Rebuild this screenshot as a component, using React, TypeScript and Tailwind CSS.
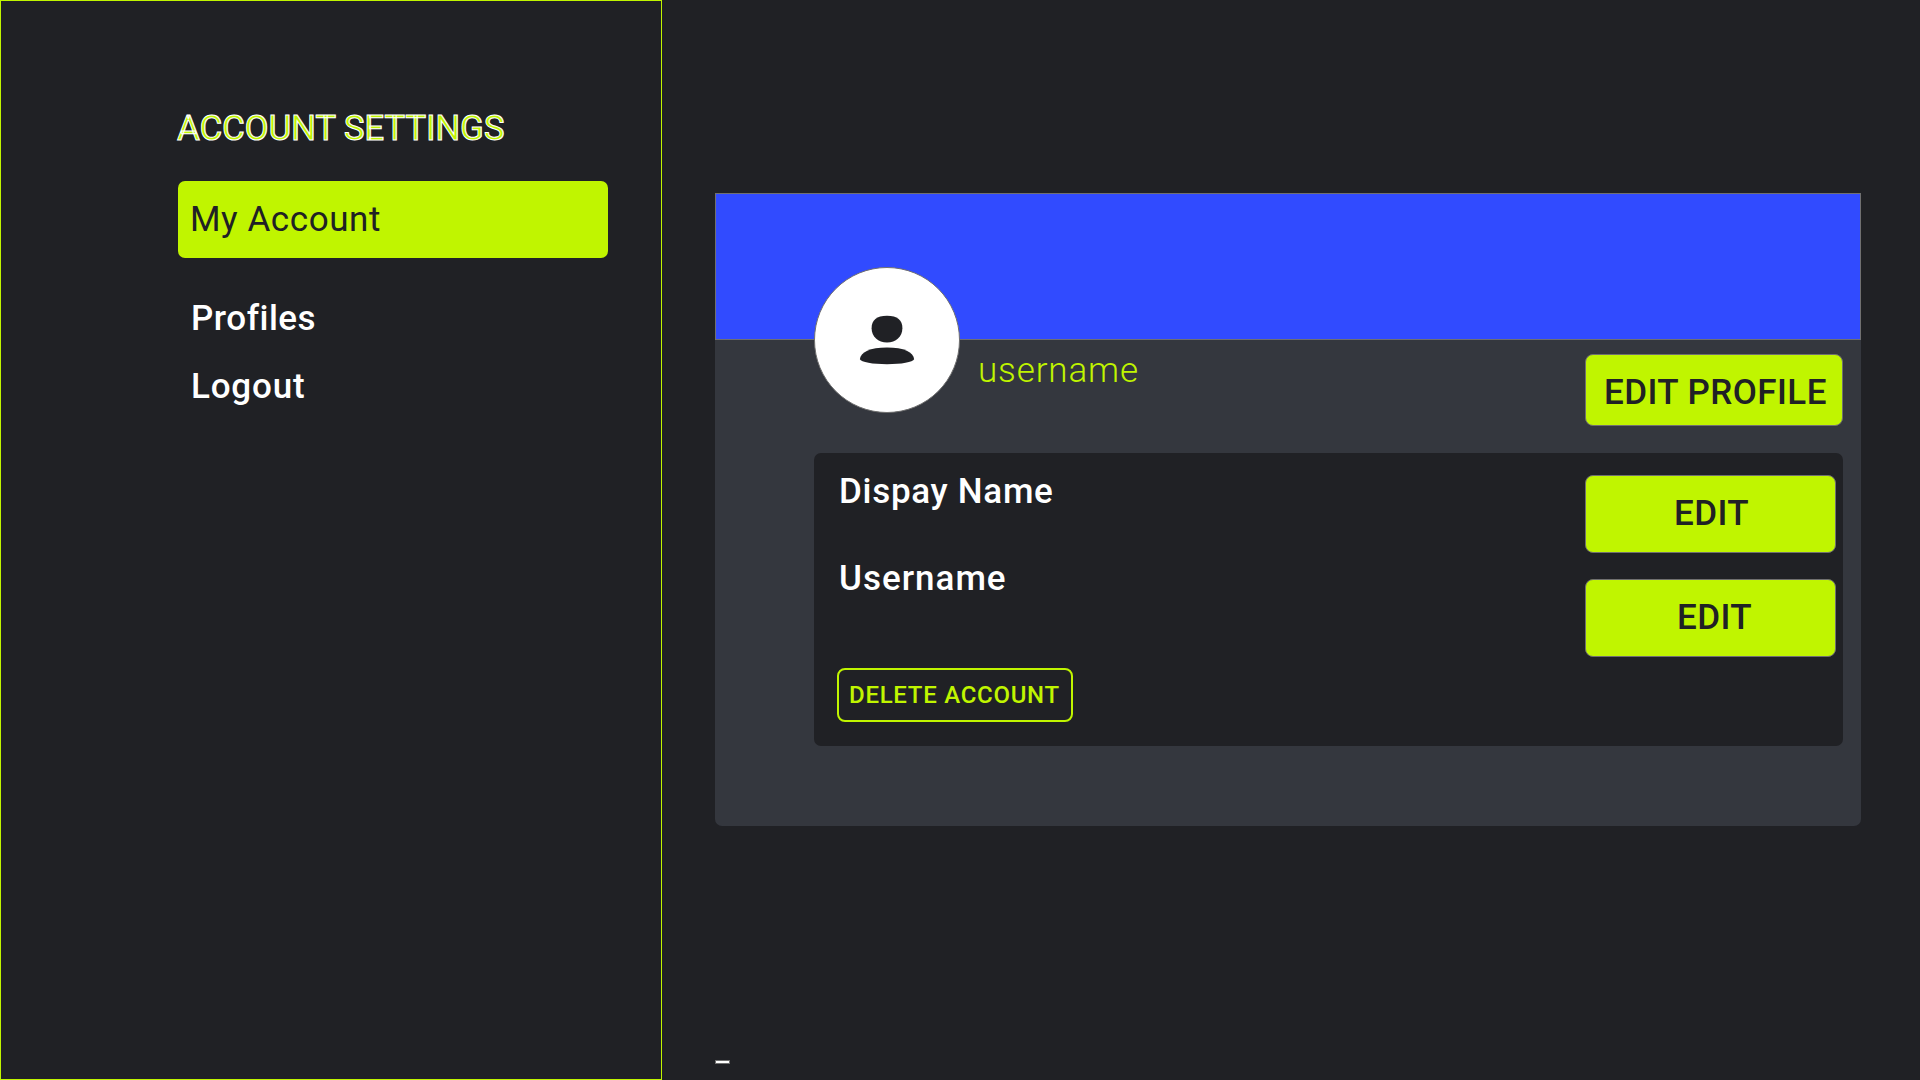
const NAV_ITEMS = [
  { label: "Profiles", spacing: "tracking-[0.5px]" },
  { label: "Logout", spacing: "tracking-[0.8px]" },
];

function PersonIcon() {
  return (
    <svg width="56" height="50" viewBox="0 0 56 50" fill="#202125" aria-hidden="true">
      <path d="M12.6 13.200C12.600 5.200 17.600 0.800 28 0.800S43.400 5.200 43.400 13.200C43.400 21.400 36.800 27.500 28 27.500S12.600 21.400 12.600 13.200Z" />
      <path d="M0.900 44.300C1.400 37 11 32.400 28 32.400S54.600 37 55.100 44.300C54 47.300 42.300 49.200 28 49.200S2 47.300 0.900 44.300Z" />
    </svg>
  );
}

function Sidebar() {
  return (
    <aside className="h-full w-[662px] shrink-0 border border-[#c0f500] pt-[108px] pr-[53px] pl-[177px]">
      <h1 className="-ml-px whitespace-nowrap tracking-[-0.2px] text-[#c0f500] [-webkit-text-stroke:1px_#ffffff]">
        ACCOUNT SETTINGS
      </h1>
      <nav className="mt-8 flex flex-col">
        <a className="flex h-[77px] items-start rounded-[7px] bg-[#c0f500] pt-[19px] pl-3 tracking-[0.56px] text-[#202125]">
          My Account
        </a>
        <div className="mt-[41px] flex flex-col gap-7 pl-[13px] font-medium text-white">
          {NAV_ITEMS.map((item) => (
            <a key={item.label} className={item.spacing}>
              {item.label}
            </a>
          ))}
        </div>
      </nav>
    </aside>
  );
}

function DetailsPanel() {
  return (
    <section className="mt-[27px] ml-[99px] flex h-[293px] w-[1029px] justify-between rounded-[7px] bg-[#202125] pr-[7px]">
      <div className="flex flex-col items-start pt-[19px] pl-[23px] font-medium text-white">
        <p className="pl-[2px] tracking-[0.7px]">Dispay Name</p>
        <p className="mt-[47px] pl-[2px] tracking-[1px]">Username</p>
        <button className="mt-[69px] flex h-[54px] w-[236px] items-start rounded-[8px] border-2 border-[#c0f500] pt-[5px] pl-[10px] text-[24px] leading-[40px] font-medium tracking-[0.72px] whitespace-nowrap text-[#c0f500]">
          DELETE ACCOUNT
        </button>
      </div>
      <div className="flex flex-col gap-[26px] pt-[22px]">
        <button className="flex h-[78px] w-[251px] items-start rounded-[8px] border border-[#707070] bg-[#c0f500] pt-[18px] pl-[88px] font-medium tracking-[0.4px] text-[#202125]">
          EDIT
        </button>
        <button className="flex h-[78px] w-[251px] items-start rounded-[8px] border border-[#707070] bg-[#c0f500] pt-[18px] pl-[91px] font-medium tracking-[0.4px] text-[#202125]">
          EDIT
        </button>
      </div>
    </section>
  );
}

function ProfileCard() {
  return (
    <article className="h-[633px] w-[1146px] overflow-hidden rounded-b-[7px] bg-[#34373e]">
      <div className="h-[147px] border border-[#707070] bg-[#314bff]" />
      <div className="flex h-[86px] items-start pr-[18px] pl-[99px]">
        <div className="relative -mt-[73px] flex size-[146px] shrink-0 items-center justify-center rounded-full border border-[#707070] bg-white">
          <PersonIcon />
        </div>
        <p className="mt-[11px] ml-[18px] font-light tracking-[0.86px] text-[#c0f500]">username</p>
        <button className="mt-[14px] ml-auto flex h-[72px] w-[258px] items-start rounded-[8px] border border-[#707070] bg-[#c0f500] pt-[18px] pl-[18px] font-medium tracking-[0.44px] whitespace-nowrap text-[#202125]">
          EDIT PROFILE
        </button>
      </div>
      <DetailsPanel />
    </article>
  );
}

export default function App() {
  return (
    <div className="flex h-[1080px] w-[1920px] overflow-hidden bg-[#202125] font-['Roboto',sans-serif] text-[35px] leading-[40px] font-normal">
      <Sidebar />
      <main className="flex flex-col items-start pt-[193px] pl-[53px]">
        <ProfileCard />
        <div className="mt-[234px] h-1 w-[15px] border border-[#707070] bg-white" />
      </main>
    </div>
  );
}
